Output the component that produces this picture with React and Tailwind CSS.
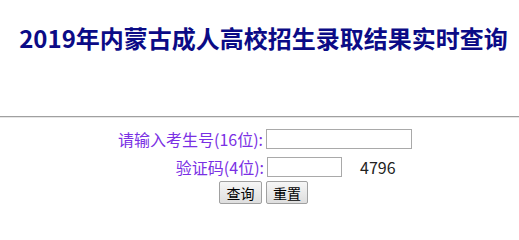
export default function App() {
  const font = { fontFamily: '"Noto Sans CJK SC", "Liberation Sans", sans-serif' };
  return (
    <div className="w-[519px] h-[217px] bg-white overflow-hidden" style={font}>
      <div className="h-[76px] pl-[8px] flex items-center justify-center">
        <h1 className="text-[24px] leading-none font-bold text-[#0b0b86] whitespace-nowrap">
          2019年内蒙古成人高校招生录取结果实时查询
        </h1>
      </div>
      <div className="h-[40px]" />
      <div className="border-t border-[#a0a0a0] border-b border-b-[#e6e6e6]" />
      <div className="ml-[115px] w-[297px] pt-[11px] flex flex-col">
        <div className="flex items-center h-[20px]">
          <label className="w-[149px] text-right text-[16px] leading-none text-[#7a30e4] whitespace-nowrap">
            请输入考生号(16位):
          </label>
          <input type="text" className="ml-[3px] w-[146px] h-[20px] border border-[#a9a9a9] bg-white outline-none" />
        </div>
        <div className="flex items-center h-[20px] mt-[8px]">
          <label className="w-[149px] text-right text-[16px] leading-none text-[#7a30e4] whitespace-nowrap">
            验证码(4位):
          </label>
          <input type="text" className="ml-[3px] w-[75px] h-[20px] border border-[#a9a9a9] bg-white outline-none" />
          <span className="ml-[18px] text-[16px] leading-none text-[#222]">4796</span>
        </div>
        <div className="flex justify-center gap-[4px] mt-[4px]">
          <button className="w-[43px] h-[23px] border border-[#a0a0a0] rounded-[2px] bg-gradient-to-b from-[#f6f6f6] to-[#dedede] text-[14px] leading-none text-black">
            查询
          </button>
          <button className="w-[42px] h-[23px] border border-[#a0a0a0] rounded-[2px] bg-gradient-to-b from-[#f6f6f6] to-[#dedede] text-[14px] leading-none text-black">
            重置
          </button>
        </div>
      </div>
    </div>
  );
}
